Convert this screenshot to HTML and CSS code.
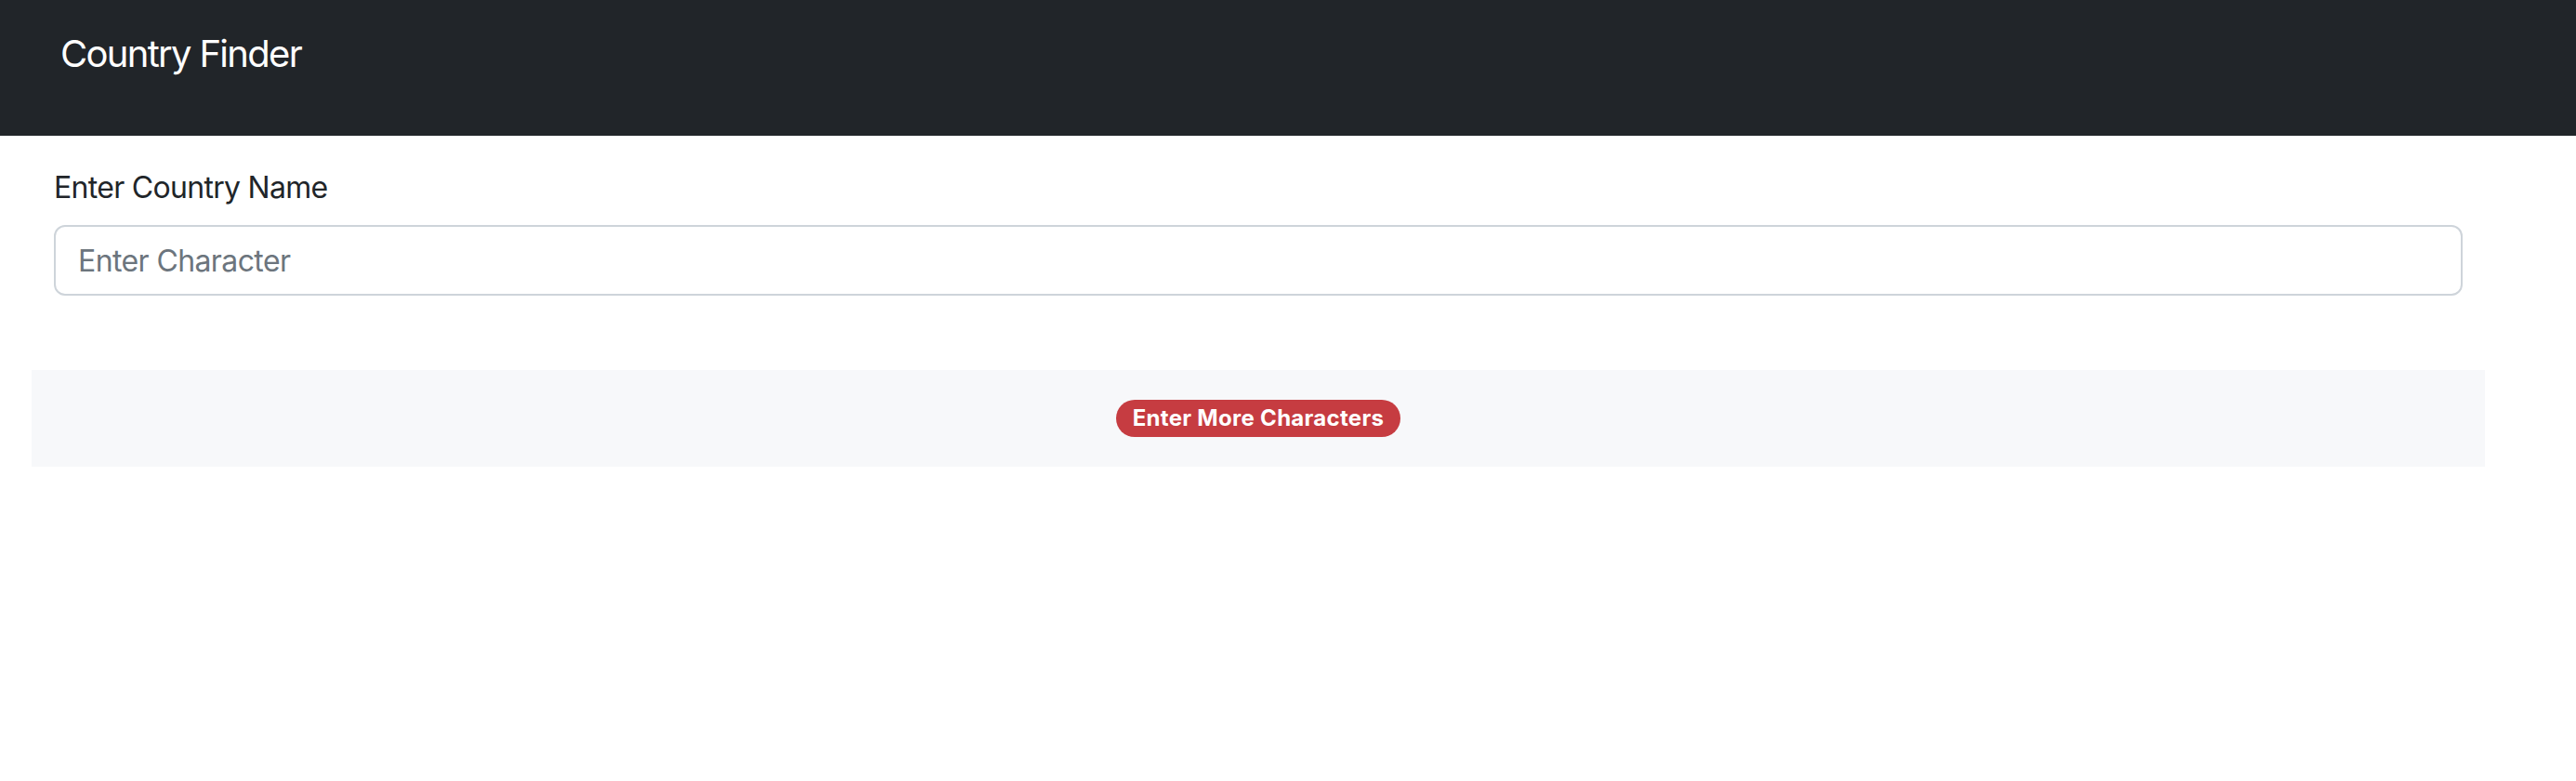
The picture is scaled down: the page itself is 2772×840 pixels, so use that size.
FILE: index.html
```html
<!DOCTYPE html>
<html lang="en">
<head>
<meta charset="utf-8">
<title>Country Finder</title>
<link rel="stylesheet" href="styles.css">
</head>
<body>
<nav class="navbar">
  <span class="brand">Country Finder</span>
</nav>
<main class="container">
  <div class="field">
    <label class="label" for="country">Enter Country Name</label>
    <input class="input" id="country" type="text" placeholder="Enter Character">
  </div>
  <div class="result">
    <span class="badge">Enter More Characters</span>
  </div>
</main>
</body>
</html>
```
FILE: styles.css
```css
* { box-sizing: border-box; }
body {
  margin: 0;
  font-family: Inter, "Noto Sans", sans-serif;
  color: #212529;
  background: #fff;
}
.navbar {
  height: 146px;
  background: #212529;
  padding: 28px 0 0 65px;
}
.brand {
  display: block;
  color: #fff;
  font-size: 40px;
  line-height: 60px;
  letter-spacing: -1.7px;
}
.container {
  width: 2640px;
  margin-left: 34px;
}
.field {
  padding: 32px 24px 0;
}
.label {
  display: block;
  font-size: 32px;
  line-height: 48px;
  margin-bottom: 16px;
  letter-spacing: -0.7px;
}
.input {
  display: block;
  width: 100%;
  height: 76px;
  border: 2px solid #ced4da;
  border-radius: 12px;
  padding: 0 24px;
  font-family: inherit;
  font-size: 32px;
  letter-spacing: -0.6px;
  color: #212529;
  background: #fff;
  outline: none;
}
.input::placeholder { color: #6c757d; opacity: 1; }
.result {
  margin-top: 80px;
  background: #f7f8fa;
  padding: 32px 0;
  display: flex;
  justify-content: center;
}
.badge {
  display: inline-block;
  height: 40px;
  line-height: 40px;
  padding: 0 18px;
  border-radius: 20px;
  background: #c63c41;
  color: #fff;
  font-size: 24px;
  font-weight: 700;
  letter-spacing: 0.3px;
}
```
